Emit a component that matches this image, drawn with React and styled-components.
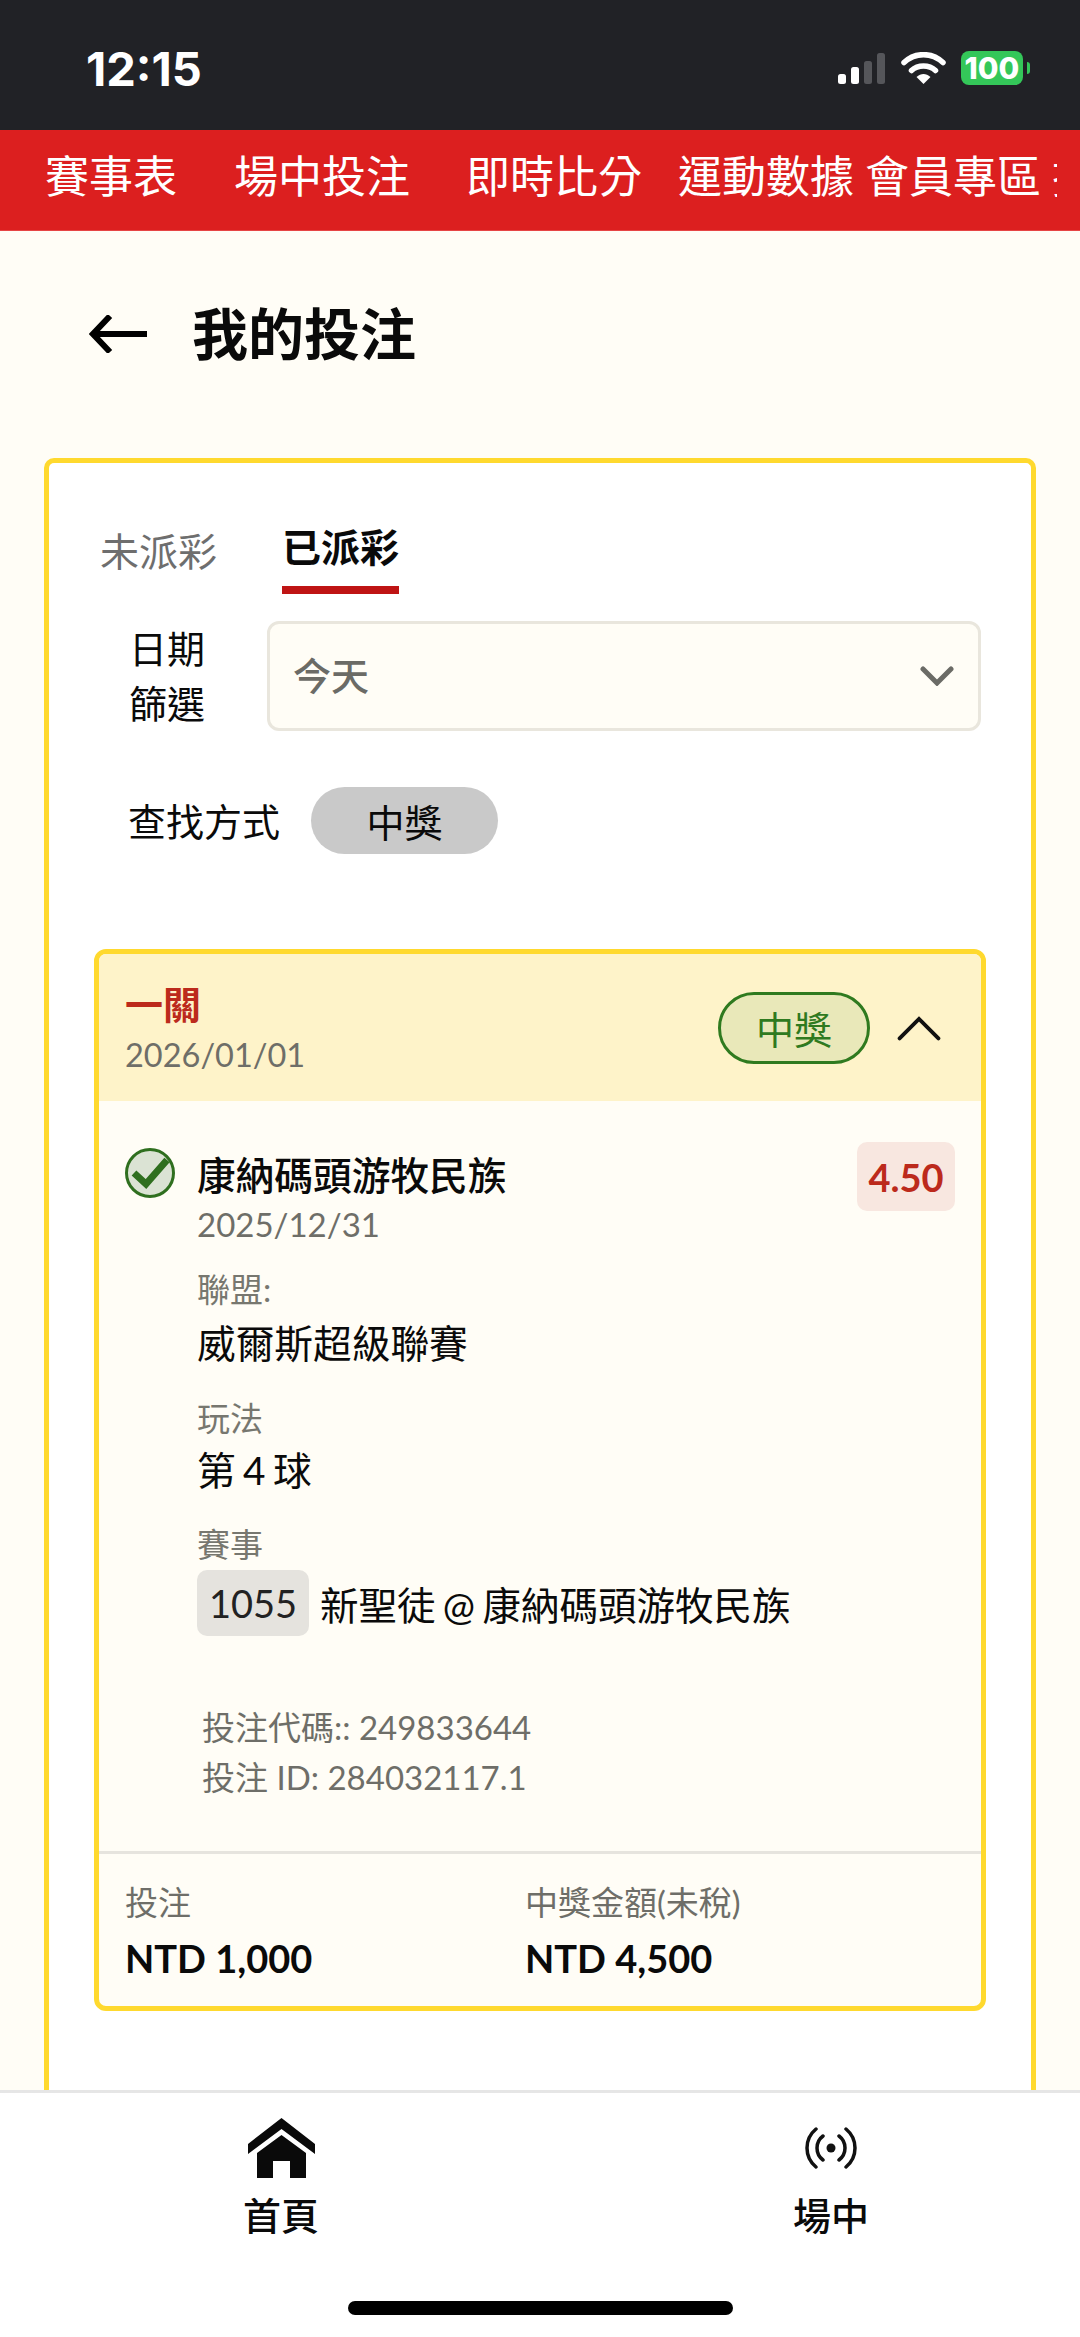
import React from "react";
import styled, { createGlobalStyle } from "styled-components";

const Global = createGlobalStyle`
  html, body { margin: 0; padding: 0; background: #fffdf6; }
  * { box-sizing: border-box; }
  body { font-family: Lato, "Noto Sans CJK TC", sans-serif; }
`;
const Page = styled.div`
  width: 1080px; height: 2337px; display: flex; flex-direction: column; overflow: hidden;
  background: #fffdf6; color: #0a0a0a;
`;
const StatusBar = styled.div`
  height: 130px; flex: none; background: #212226; color: #fff; display: flex; align-items: center;
  justify-content: space-between; padding: 6px 57px 0 86px;
`;
const Time = styled.div`
  font: 700 47px/1 Inter, "Liberation Sans", sans-serif;
`;
const StatusIcons = styled.div`
  display: flex; align-items: center;
`;
const Battery = styled.div`
  width: 62px; height: 34px; border-radius: 8px; background: #34c759; color: #fff; margin-left: 15px;
  font: 800 30px/34px Inter, "Liberation Sans", sans-serif; text-align: center; position: relative;
  &::after { content: ""; position: absolute; right: -7px; top: 11px; width: 3px; height: 12px; background: #34c759; border-radius: 0 4px 4px 0; }
`;
const RedNav = styled.nav`
  height: 101px; flex: none; background: #dc1f1f; border-bottom: 1px solid #e64545; display: flex; align-items: center;
  padding: 0 23px 8px 0; color: #fff; font-size: 44px; line-height: 60px;
`;
const NavScroll = styled.div`
  display: flex; flex: 1; min-width: 0; overflow: hidden; white-space: nowrap;
`;
const NavItem = styled.span`
  flex: none; margin-left: ${p => p.$ml}px;
`;
const TitleRow = styled.header`
  height: 227px; flex: none; display: flex; align-items: center; padding: 0 0 21px 89px; gap: 45px;
`;
const Title = styled.h1`
  margin: 0; font-size: 56px; font-weight: 700; line-height: 70px;
`;
const Main = styled.main`
  flex: 1; min-height: 0; padding: 0 44px; overflow: hidden;
`;
const OuterCard = styled.section`
  background: #fff; border: 5px solid #ffd92e; border-bottom: 0; border-radius: 10px 10px 0 0; height: 1640px;
  padding: 54px 45px 0 45px;
`;
const Tabs = styled.div`
  display: flex; gap: 65px; padding-left: 6px; height: 77px;
`;
const Tab = styled.div`
  font-size: 39px; line-height: 50px; height: 77px; font-weight: ${p => p.$active ? 700 : 400};
  color: ${p => p.$active ? "#0a0a0a" : "#6e6e6e"}; padding-top: ${p => p.$active ? 5 : 9}px;
  border-bottom: ${p => p.$active ? "8px solid #bf1414" : "8px solid transparent"};
`;
const FilterRow = styled.div`
  display: flex; align-items: center; margin-top: 27px;
`;
const FilterLabel = styled.div`
  width: 173px; padding-left: 35px; font-size: 38px; line-height: 55px; flex: none;
`;
const Select = styled.div`
  width: 714px; height: 110px; border: 3px solid #e9e6dd; border-radius: 12px; background: #fffdf6; display: flex;
  align-items: center; justify-content: space-between; padding: 0 24px 0 23px; color: #6b6b66; font-size: 38px; font-weight: 500;
`;
const SelectText = styled.span`margin-top: -5px;`;
const SearchRow = styled.div`
  display: flex; align-items: center; gap: 31px; margin-top: 56px; padding-left: 34px;
`;
const SearchLabel = styled.div`font-size: 38px; line-height: 50px;`;
const Pill = styled.div`
  width: 187px; height: 67px; border-radius: 34px; background: #c9c9c9; display: flex; align-items: center; justify-content: center; font-size: 38px;
`;
const BetCard = styled.article`
  margin-top: 95px; width: 892px; height: 1062px; border: 5px solid #ffd92e; border-radius: 12px; background: #fffdf6;
  display: flex; flex-direction: column; overflow: hidden;
`;
const BetHead = styled.div`
  height: 147px; flex: none; background: #fef3c9; display: flex; align-items: center; justify-content: space-between; padding: 0 40px 0 26px;
`;
const HeadText = styled.div`display: flex; flex-direction: column;`;
const BetType = styled.div`font-size: 38px; line-height: 50px; font-weight: 700; color: #bc2a1c;`;
const DateText = styled.div`font-size: 32.5px; line-height: 44px; color: #6e6e68; margin-top: 4px;`;
const HeadRight = styled.div`display: flex; align-items: center; gap: 27px;`;
const WinBadge = styled.div`
  width: 152px; height: 72px; border-radius: 36px; border: 3px solid #2f7a1f; background: #e9e8b9; color: #2f7a1f;
  display: flex; align-items: center; justify-content: center; font-size: 38px;
`;
const BetBody = styled.div`
  flex: 1; min-height: 0; padding: 41px 26px 0 26px; display: flex; flex-direction: column;
`;
const Leg = styled.div`display: flex; align-items: flex-start;`;
const CheckWrap = styled.div`width: 72px; flex: none; margin-top: 6px;`;
const LegMain = styled.div`flex: 1; min-width: 0;`;
const TeamRow = styled.div`display: flex; justify-content: space-between; align-items: flex-start;`;
const Team = styled.div`font-size: 38.7px; line-height: 50px; font-weight: 500; margin-top: 8px;`;
const Odds = styled.div`
  width: 98px; height: 69px; background: #f8e7e0; border-radius: 10px; color: #bc2a1c; font-size: 38px; font-weight: 700;
  display: flex; align-items: center; justify-content: center;
`;
const LegDate = styled.div`font-size: 33px; line-height: 40px; color: #6e6e68; margin-top: -7px;`;
const Field = styled.div`margin-top: ${p => p.$mt}px;`;
const FieldLabel = styled.div`font-size: 33px; line-height: 44px; color: #77776f;`;
const FieldValue = styled.div`font-size: 38.7px; line-height: 50px; margin-top: ${p => p.$mt}px; word-spacing: -2.5px;`;
const MatchRow = styled.div`display: flex; align-items: center; gap: 11px; font-size: 38.5px; margin-top: 4px; word-spacing: -2.5px;`;
const MatchId = styled.span`
  width: 112px; height: 66px; background: #e5e3de; border-radius: 10px; display: flex; align-items: center; justify-content: center; color: #222; font-size: 38px;
`;
const Ids = styled.div`
  margin: 66px 0 0 77px; color: #6e6e68; font-size: 33px; line-height: 50px;
`;
const BetFoot = styled.div`
  height: 155px; flex: none; border-top: 3px solid #e6e4de; display: grid; grid-template-columns: 400px 1fr; padding: 26px 26px 0;
`;
const FootLabel = styled.div`font-size: 33px; line-height: 44px; color: #6e6e68;`;
const FootValue = styled.div`font-size: 38px; line-height: 48px; font-weight: 700; margin-top: 10px;`;
const BottomNav = styled.nav`
  height: 247px; flex: none; background: #fff; border-top: 3px solid #e6e6e6; display: flex; flex-direction: column;
`;
const NavTabs = styled.div`display: flex; gap: 350px; padding: 25px 0 0 181px;`;
const NavTab = styled.div`
  width: 200px; display: flex; flex-direction: column; align-items: center; font-size: 38px; font-weight: 500; line-height: 50px;
`;
const IconBox = styled.div`height: 60px; display: flex; align-items: center; justify-content: center; margin-bottom: 12px;`;
const HomeBar = styled.div`
  width: 385px; height: 14px; background: #000; border-radius: 7px; margin: 61px 0 0 348px;
`;

const Signal = () => (
  <svg width="47" height="32" viewBox="0 0 47 32">
    <rect x="0" y="22" width="8" height="10" rx="2.5" fill="#fff" />
    <rect x="13" y="15" width="8" height="17" rx="2.5" fill="#fff" />
    <rect x="26" y="9" width="8" height="23" rx="2.5" fill="#55565a" />
    <rect x="39" y="1" width="8" height="31" rx="2.5" fill="#55565a" />
  </svg>
);
const Wifi = () => (
  <svg width="45" height="32" viewBox="0 0 45 32" style={{ marginLeft: 16 }}>
    <path d="M3 10.5 C14 0 31 0 42 10.5" fill="none" stroke="#fff" strokeWidth="5.5" strokeLinecap="round" />
    <path d="M10.5 18.5 C17 12.5 28 12.5 34.5 18.5" fill="none" stroke="#fff" strokeWidth="5.5" strokeLinecap="round" />
    <path d="M15.5 25 C20 21 25 21 29.5 25 L22.5 32 Z" fill="#fff" />
  </svg>
);
const BackArrow = () => (
  <svg width="58" height="38" viewBox="0 0 58 38">
    <path d="M58 19 H5 M21 1 L4 19 L21 37" fill="none" stroke="#000" strokeWidth="6" />
  </svg>
);
const Chevron = ({ up, color, w, h, sw }) => (
  <svg width={w} height={h} viewBox="0 0 34 20">
    <path d={up ? "M2 18 L17 3 L32 18" : "M3 3 L17 17 L31 3"} fill="none" stroke={color} strokeWidth={sw} strokeLinecap="round" />
  </svg>
);
const Check = () => (
  <svg width="50" height="50" viewBox="0 0 50 50">
    <circle cx="25" cy="25" r="23.5" fill="#dbe3d4" stroke="#2f6f1f" strokeWidth="3" />
    <path d="M9 25 L21 36 L42 12" fill="none" stroke="#2f6f1f" strokeWidth="7" />
  </svg>
);
const Home = () => (
  <svg width="67" height="60" viewBox="0 0 67 60">
    <path d="M33.5 0 L67 26 V36 L33.5 11 L0 36 V26 Z M33.5 17 L58 35 V60 H42 V43 H25 V60 H9 V35 Z" fill="#0a0a0a" />
  </svg>
);
const Live = () => (
  <svg width="52" height="42" viewBox="0 0 52 42">
    <circle cx="26" cy="21" r="4.5" fill="#111" />
    <path d="M18 9 C10 15 10 27 18 33 M34 9 C42 15 42 27 34 33 M11 2 C-1 12 -1 30 11 40 M41 2 C53 12 53 30 41 40" fill="none" stroke="#111" strokeWidth="3.5" strokeLinecap="round" />
  </svg>
);

export default function App() {
  return (
    <Page>
      <Global />
      <StatusBar>
        <Time>12:15</Time>
        <StatusIcons>
          <Signal />
          <Wifi />
          <Battery>100</Battery>
        </StatusIcons>
      </StatusBar>
      <RedNav>
        <NavScroll>
          <NavItem $ml={45}>賽事表</NavItem>
          <NavItem $ml={57}>場中投注</NavItem>
          <NavItem $ml={56}>即時比分</NavItem>
          <NavItem $ml={36}>運動數據</NavItem>
          <NavItem $ml={11}>會員專區</NavItem>
          <NavItem $ml={11}>技術</NavItem>
        </NavScroll>
      </RedNav>
      <TitleRow>
        <BackArrow />
        <Title>我的投注</Title>
      </TitleRow>
      <Main>
        <OuterCard>
          <Tabs>
            <Tab>未派彩</Tab>
            <Tab $active>已派彩</Tab>
          </Tabs>
          <FilterRow>
            <FilterLabel>日期<br />篩選</FilterLabel>
            <Select>
              <SelectText>今天</SelectText>
              <Chevron color="#6b6b66" w={34} h={20} sw={5} />
            </Select>
          </FilterRow>
          <SearchRow>
            <SearchLabel>查找方式</SearchLabel>
            <Pill>中獎</Pill>
          </SearchRow>
          <BetCard>
            <BetHead>
              <HeadText>
                <BetType>一關</BetType>
                <DateText>2026/01/01</DateText>
              </HeadText>
              <HeadRight>
                <WinBadge>中獎</WinBadge>
                <Chevron up color="#111" w={44} h={26} sw={3} />
              </HeadRight>
            </BetHead>
            <BetBody>
              <Leg>
                <CheckWrap><Check /></CheckWrap>
                <LegMain>
                  <TeamRow>
                    <Team>康納碼頭游牧民族</Team>
                    <Odds>4.50</Odds>
                  </TeamRow>
                  <LegDate>2025/12/31</LegDate>
                  <Field $mt={23}>
                    <FieldLabel>聯盟:</FieldLabel>
                    <FieldValue $mt={7}>威爾斯超級聯賽</FieldValue>
                  </Field>
                  <Field $mt={28}>
                    <FieldLabel>玩法</FieldLabel>
                    <FieldValue $mt={5}>第 4 球</FieldValue>
                  </Field>
                  <Field $mt={27}>
                    <FieldLabel>賽事</FieldLabel>
                    <MatchRow>
                      <MatchId>1055</MatchId>
                      新聖徒 @ 康納碼頭游牧民族
                    </MatchRow>
                  </Field>
                </LegMain>
              </Leg>
              <Ids>
                投注代碼:: 249833644<br />
                投注 ID: 284032117.1
              </Ids>
            </BetBody>
            <BetFoot>
              <div>
                <FootLabel>投注</FootLabel>
                <FootValue>NTD 1,000</FootValue>
              </div>
              <div>
                <FootLabel>中獎金額(未稅)</FootLabel>
                <FootValue>NTD 4,500</FootValue>
              </div>
            </BetFoot>
          </BetCard>
        </OuterCard>
      </Main>
      <BottomNav>
        <NavTabs>
          <NavTab>
            <IconBox><Home /></IconBox>
            首頁
          </NavTab>
          <NavTab>
            <IconBox><Live /></IconBox>
            場中
          </NavTab>
        </NavTabs>
        <HomeBar />
      </BottomNav>
    </Page>
  );
}
